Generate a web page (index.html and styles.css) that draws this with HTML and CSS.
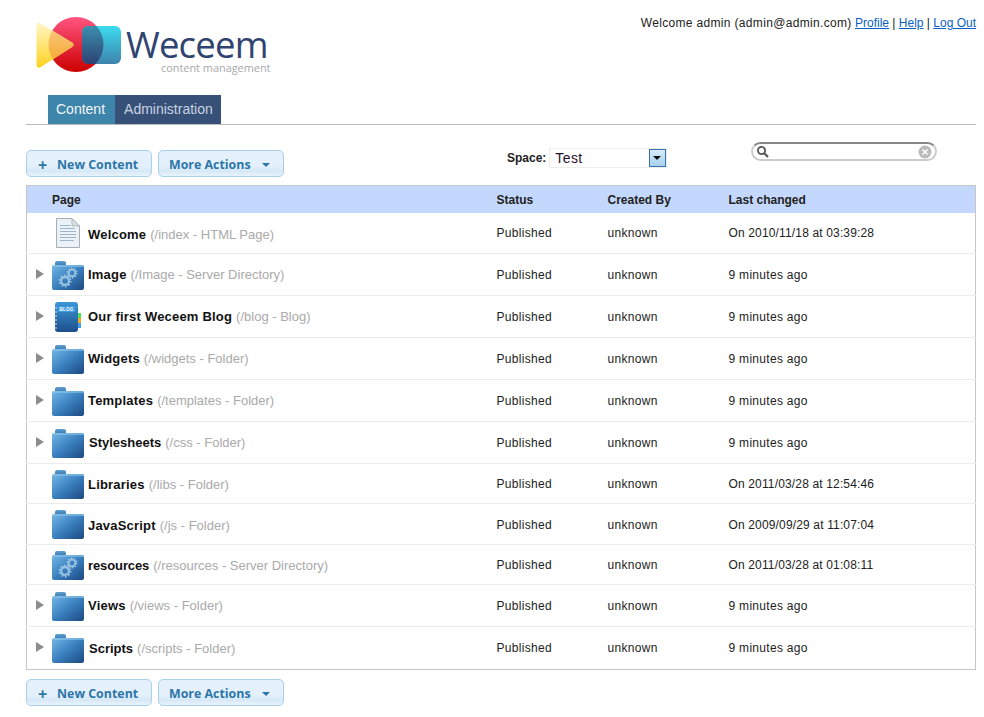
FILE: index.html
```html
<!DOCTYPE html>
<html lang="en">
<head>
<meta charset="utf-8">
<title>Weceem</title>
<link rel="stylesheet" href="styles.css">
</head>
<body>
<svg class="defs" width="0" height="0" aria-hidden="true">
  <defs>
    <linearGradient id="fBody" x1="0" y1="0" x2="1" y2="1"><stop offset="0" stop-color="#74b8e6"/><stop offset=".5" stop-color="#3a80bf"/><stop offset="1" stop-color="#1c4880"/></linearGradient>
    <linearGradient id="fTab" x1="0" y1="0" x2="0" y2="1"><stop offset="0" stop-color="#5f9fcf"/><stop offset="1" stop-color="#3b78b0"/></linearGradient>
    <linearGradient id="bBody" x1="0" y1="0" x2="0" y2="1"><stop offset="0" stop-color="#3c97d6"/><stop offset="1" stop-color="#1d4f8c"/></linearGradient>
    <linearGradient id="lRed" x1="0" y1="0" x2="0" y2="1"><stop offset="0" stop-color="#ff5580"/><stop offset="1" stop-color="#cc0000"/></linearGradient>
    <linearGradient id="lYel" x1="0" y1="0" x2="0" y2="1"><stop offset="0" stop-color="#fff6c8"/><stop offset="1" stop-color="#ffd21e"/></linearGradient>
    <linearGradient id="lOra" x1="0" y1="0" x2="0" y2="1"><stop offset="0" stop-color="#fbc98a"/><stop offset="1" stop-color="#f5a623"/></linearGradient>
    <linearGradient id="lBlu" x1="0" y1="0" x2="0" y2="1"><stop offset="0" stop-color="#3cdcf0"/><stop offset="1" stop-color="#3d83ad"/></linearGradient>
    <linearGradient id="lOver" x1="0" y1="0" x2="0" y2="1"><stop offset="0" stop-color="#3b8fae"/><stop offset="1" stop-color="#2e4272"/></linearGradient>
    <clipPath id="lCirc"><circle cx="40" cy="29.500" r="27.500"/></clipPath>
    <symbol id="folder" viewBox="0 0 32 30">
      <path d="M3 3 Q3 1 5 1 H12 Q14 1 14 3 V6 H3Z" fill="url(#fTab)"/>
      <path d="M0 7 Q0 5 2 5 H30 Q32 5 32 7 V28 Q32 30 30 30 H2 Q0 30 0 28Z" fill="url(#fBody)"/>
      <path d="M0 7 Q0 5 2 5 H30 Q32 5 32 7 H0Z" fill="#8cc6ea" opacity=".6"/>
    </symbol>
    <symbol id="gear" viewBox="0 0 20 20">
      <circle cx="10" cy="10" r="5.500" fill="none" stroke="#9cc5e2" stroke-width="3"/>
      <circle cx="10" cy="10" r="8" fill="none" stroke="#9cc5e2" stroke-width="2.400" stroke-dasharray="2.400 2.600"/>
    </symbol>
    <symbol id="dirfolder" viewBox="0 0 32 30">
      <use href="#folder" width="32" height="30"/>
      <use href="#gear" x="6" y="14" width="14" height="14"/>
      <use href="#gear" x="14" y="7" width="12" height="12"/>
    </symbol>
    <symbol id="page" viewBox="0 0 26 30">
      <path d="M1.500 .5 H17 L24.500 8 V29.500 H1.500Z" fill="#eaf1f7" stroke="#a8aeb4"/>
      <path d="M17 .5 V8 H24.500Z" fill="#d7dfe6" stroke="#a8aeb4" stroke-width=".8"/>
      <path d="M5 7.500 H15 M5 10.500 H20 M5 13.500 H21 M5 16.500 H21 M5 19.500 H21 M5 22.500 H19" stroke="#9eb5c9" stroke-width="1.200"/>
    </symbol>
    <symbol id="blog" viewBox="0 0 28 32">
      <rect x="1" y="1" width="23" height="30" rx="3" fill="url(#bBody)"/>
      <rect x="3.500" y="5" width="18" height="6" rx="1" fill="#3f9be0"/>
      <text x="12.500" y="10" class="blogword" text-anchor="middle">BLOG</text>
      <path d="M0 7 H3 M0 11 H3 M0 15 H3 M0 19 H3 M0 23 H3 M0 27 H3" stroke="#d7dfe6" stroke-width="1.200"/>
      <rect x="24" y="12" width="3" height="5" fill="#4fe04a"/>
      <rect x="24" y="17" width="3" height="5" fill="#f2a72c"/>
      <rect x="24" y="22" width="3" height="5" fill="#3fa0ee"/>
    </symbol>
  </defs>
</svg>

<div class="page">
  <header class="top">
    <a class="logo" href="#">
      <svg class="logo-mark" width="90" height="62" viewBox="0 0 90 62" aria-hidden="true">
        <circle cx="40" cy="29.500" r="27.500" fill="url(#lRed)"/>
        <path d="M3 7.500 Q.5 7 .5 11 V49 Q.5 54 4 52.500 L36 32 Q39 29.500 36 27.500Z" fill="url(#lYel)"/>
        <path d="M3 7.500 Q.5 7 .5 11 V49 Q.5 54 4 52.500 L36 32 Q39 29.500 36 27.500Z" fill="url(#lOra)" clip-path="url(#lCirc)"/>
        <rect x="46" y="11" width="39" height="38" rx="6" fill="url(#lBlu)"/>
        <rect x="46" y="11" width="39" height="38" rx="6" fill="url(#lOver)" clip-path="url(#lCirc)"/>
      </svg>
      <span class="wordmark">
        <span class="logo-name">Weceem</span>
        <span class="logo-sub">content management</span>
      </span>
    </a>
    <p class="userbar"><span class="welcome">Welcome admin (admin@admin.com)</span> <a href="#">Profile</a> | <a href="#">Help</a> | <a href="#">Log Out</a></p>
  </header>

  <nav class="tabs">
    <a class="tab tab-on" href="#">Content</a>
    <a class="tab" href="#">Administration</a>
  </nav>

  <section class="toolbar">
    <div class="btns btns-top">
      <button class="btn" type="button"><span class="plus">+</span>New Content</button>
      <button class="btn btn-more" type="button">More Actions<span class="caret"></span></button>
    </div>
    <div class="space">
      <label class="space-label">Space:</label>
      <div class="select"><span>Test</span><span class="select-btn"></span></div>
    </div>
    <div class="search">
      <svg width="14" height="14" viewBox="0 0 14 14" aria-hidden="true"><circle cx="5.500" cy="5.500" r="3.600" fill="none" stroke="#555" stroke-width="1.800"/><path d="M8.300 8.300 L12 12" stroke="#555" stroke-width="2.200"/></svg>
      <svg width="14" height="14" viewBox="0 0 14 14" aria-hidden="true"><circle cx="7" cy="7" r="6.500" fill="#bbb"/><path d="M4.500 4.500 L9.500 9.500 M9.500 4.500 L4.500 9.500" stroke="#fff" stroke-width="1.600"/></svg>
    </div>
  </section>

  <table class="grid">
    <thead>
      <tr>
        <th class="c-page">Page</th>
        <th class="c-status">Status</th>
        <th class="c-by">Created By</th>
        <th class="c-date">Last changed</th>
      </tr>
    </thead>
    <tbody>
      <tr class="r41"><td><div class="cell"><span class="tog"></span><span class="ico"><svg class="i-page" width="26" height="30"><use href="#page"/></svg></span><b>Welcome</b><em>(/index - HTML Page)</em></div></td><td>Published</td><td>unknown</td><td class="date">On 2010/11/18 at 03:39:28</td></tr>
      <tr class="r42"><td><div class="cell"><span class="tog on"></span><span class="ico"><svg width="32" height="30"><use href="#dirfolder"/></svg></span><b>Image</b><em>(/Image - Server Directory)</em></div></td><td>Published</td><td>unknown</td><td>9 minutes ago</td></tr>
      <tr class="r42"><td><div class="cell"><span class="tog on"></span><span class="ico"><svg class="i-blog" width="28" height="32"><use href="#blog"/></svg></span><b>Our first Weceem Blog</b><em>(/blog - Blog)</em></div></td><td>Published</td><td>unknown</td><td>9 minutes ago</td></tr>
      <tr class="r42"><td><div class="cell"><span class="tog on"></span><span class="ico"><svg width="32" height="30"><use href="#folder"/></svg></span><b>Widgets</b><em>(/widgets - Folder)</em></div></td><td>Published</td><td>unknown</td><td>9 minutes ago</td></tr>
      <tr class="r42"><td><div class="cell"><span class="tog on"></span><span class="ico"><svg width="32" height="30"><use href="#folder"/></svg></span><b>Templates</b><em>(/templates - Folder)</em></div></td><td>Published</td><td>unknown</td><td>9 minutes ago</td></tr>
      <tr class="r42"><td><div class="cell"><span class="tog on"></span><span class="ico"><svg width="32" height="30"><use href="#folder"/></svg></span><b class="wide">Stylesheets</b><em>(/css - Folder)</em></div></td><td>Published</td><td>unknown</td><td>9 minutes ago</td></tr>
      <tr class="r40"><td><div class="cell"><span class="tog"></span><span class="ico"><svg width="32" height="30"><use href="#folder"/></svg></span><b>Libraries</b><em>(/libs - Folder)</em></div></td><td>Published</td><td>unknown</td><td class="date">On 2011/03/28 at 12:54:46</td></tr>
      <tr class="r41"><td><div class="cell"><span class="tog"></span><span class="ico"><svg width="32" height="30"><use href="#folder"/></svg></span><b>JavaScript</b><em>(/js - Folder)</em></div></td><td class="low">Published</td><td class="low">unknown</td><td class="date low">On 2009/09/29 at 11:07:04</td></tr>
      <tr class="r40"><td><div class="cell"><span class="tog"></span><span class="ico"><svg width="32" height="30"><use href="#dirfolder"/></svg></span><b class="tight">resources</b><em>(/resources - Server Directory)</em></div></td><td>Published</td><td>unknown</td><td class="date">On 2011/03/28 at 01:08:11</td></tr>
      <tr class="r42"><td><div class="cell"><span class="tog on"></span><span class="ico"><svg width="32" height="30"><use href="#folder"/></svg></span><b>Views</b><em>(/views - Folder)</em></div></td><td>Published</td><td>unknown</td><td>9 minutes ago</td></tr>
      <tr class="r43"><td><div class="cell"><span class="tog on"></span><span class="ico"><svg width="32" height="30"><use href="#folder"/></svg></span><b class="wide">Scripts</b><em>(/scripts - Folder)</em></div></td><td>Published</td><td>unknown</td><td>9 minutes ago</td></tr>
    </tbody>
  </table>

  <div class="btns btns-bottom">
    <button class="btn" type="button"><span class="plus">+</span>New Content</button>
    <button class="btn btn-more" type="button">More Actions<span class="caret"></span></button>
  </div>
</div>
</body>
</html>
```
FILE: styles.css
```css
* { box-sizing: border-box; }
html, body { margin: 0; padding: 0; background: #fff; }
body { font-family: "Liberation Sans", Arial, sans-serif; font-size: 12px; color: #222; }
.defs { display: block; height: 0; }
.page { width: 976px; padding-left: 26px; }
a { color: #0a5fc4; }

.top { display: flex; justify-content: space-between; align-items: flex-start; height: 95px; }
.logo { display: flex; align-items: flex-start; margin: 15px 0 0 10px; text-decoration: none; }
.logo-mark { display: block; }
.wordmark { display: flex; flex-direction: column; margin: 11px 0 0 0; }
.logo-name { font-family: "Open Sans", sans-serif; font-size: 36.500px; line-height: 37px; color: #2f4470; letter-spacing: -.8px; }
.logo-sub { font-family: "Open Sans", sans-serif; font-size: 10.900px; line-height: 10px; color: #a9a9a9; margin: 0 0 0 35px; white-space: nowrap; }
.userbar { margin: 15px 0 0; font-size: 12px; line-height: 16px; color: #222; }
.welcome { letter-spacing: .33px; }

.tabs { display: flex; height: 30px; padding-left: 22px; border-bottom: 1px solid #bbb; }
.tab { display: block; height: 29px; line-height: 28px; padding: 0 8px 0 9px; font-size: 14px; text-decoration: none; background: #365078; color: #c9d3e0; }
.tab-on { padding: 0 10px 0 8px; background: #3e85ab; color: #f2f6f9; }

.toolbar { display: flex; align-items: flex-start; height: 60px; }
.btns { display: flex; gap: 6px; }
.btns-top { margin-top: 25px; }
.btns-bottom { margin-top: 9px; }
.btn { display: flex; align-items: center; width: 126px; height: 27px; padding: 2px 0 0 11px; border: 1px solid #a9cfe9; border-radius: 5px; background: linear-gradient(#e4f0fb 0, #e4f0fb 60%, #d6e8f7 80%, #e8f3fb 100%); color: #2c76a8; font: bold 12.400px "Open Sans", "Liberation Sans", sans-serif; }
.btn-more { padding-left: 10px; }
.plus { display: inline-block; width: 19px; font-size: 16px; line-height: 16px; text-align: left; }
.caret { width: 0; height: 0; margin-left: 11px; border-left: 4px solid transparent; border-right: 4px solid transparent; border-top: 4px solid #2c76a8; }

.space { display: flex; align-items: center; margin: 23px 0 0 223px; }
.space-label { font-weight: bold; font-size: 12px; color: #222; margin-right: 3px; }
.select { display: flex; align-items: center; justify-content: space-between; width: 118px; height: 20px; padding-left: 5px; border: 1px solid #eee; font-size: 14px; letter-spacing: .4px; color: #2a1030; }
.select-btn { position: relative; width: 17px; height: 18px; border: 1px solid #3a73a8; background: linear-gradient(#d8ebf9, #a6d0ef); }
.select-btn::after { content: ""; position: absolute; left: 3px; top: 6px; border-left: 4px solid transparent; border-right: 4px solid transparent; border-top: 4px solid #111; }
.search { display: flex; align-items: center; justify-content: space-between; width: 186px; height: 19px; margin: 17px 0 0 84px; padding: 0 3px; border: 2px solid #ccc; border-top-color: #888; border-radius: 10px; }

.grid { width: 950px; border-collapse: collapse; table-layout: fixed; border: 1px solid #c6c6c6; }
.grid thead tr { height: 27px; background: #c3d8fc; }
.grid th { padding: 2px 0 0; font-size: 12px; font-weight: bold; text-align: left; color: #222; vertical-align: middle; }
.c-page { width: 470px; padding-left: 25px !important; }
.c-status { width: 111px; }
.c-by { width: 121px; }
.grid td { padding: 0; font-size: 12px; letter-spacing: .3px; border-top: 1px solid #ececec; vertical-align: middle; color: #222; }
.grid td.date { letter-spacing: .15px; }
.grid td.low { padding-top: 2px; }
.grid tbody tr:first-child td { border-top: 0; }
.r40 { height: 40px; }
.r41 { height: 41px; }
.r42 { height: 42px; }
.r43 { height: 43px; }
.cell { display: flex; align-items: center; white-space: nowrap; }
.tog { width: 8px; height: 10px; margin: -2px 8px 0 9px; flex: none; }
.tog.on { border-left: 8px solid #8c8c8c; border-top: 5px solid transparent; border-bottom: 5px solid transparent; }
.ico { display: flex; justify-content: center; width: 32px; margin-right: 4px; flex: none; }
.ico svg { display: block; }
.cell b { font-size: 13px; letter-spacing: .2px; color: #111; }
.cell b.wide { margin-left: 1px; letter-spacing: 0; }
.cell b.tight { letter-spacing: -.1px; }
.cell em { margin-left: 4px; font-style: normal; font-size: 13px; letter-spacing: 0; color: #aaa; }
.r40 b, .r40 em, .r41 b, .r41 em { margin-top: 2px; }
.grid tbody tr:first-child b, .grid tbody tr:first-child em { margin-top: 4px; }
.blogword { font: bold 4.500px "Liberation Sans", sans-serif; fill: #fff; }
```
